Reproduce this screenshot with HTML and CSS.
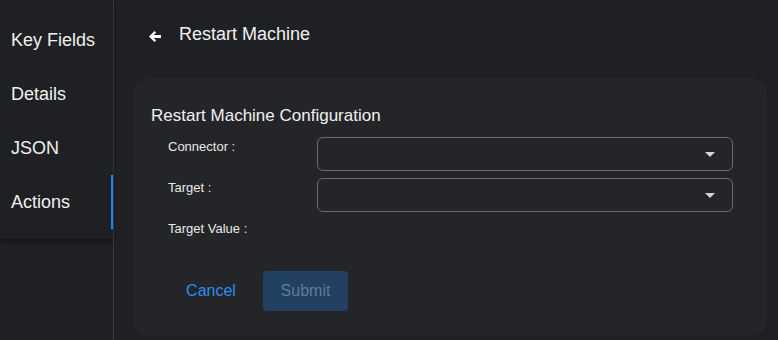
FILE: index.html
```html
<!DOCTYPE html>
<html lang="en">
<head>
    <meta charset="UTF-8">
    <meta name="viewport" content="width=device-width, initial-scale=1.0">
    <title>Restart Machine</title>
    <link rel="stylesheet" href="styles.css">
</head>
<body>
    <div class="layout">
        <aside class="sidebar">
            <nav class="nav">
                <div class="nav-item">Key Fields</div>
                <div class="nav-item">Details</div>
                <div class="nav-item">JSON</div>
                <div class="nav-item active">Actions</div>
            </nav>
        </aside>
        <main class="main">
            <div class="header">
                <svg class="back-icon" viewBox="0 0 12 11" width="12" height="11">
                    <path d="M5.5 0 L0 5.5 L5.5 11 L7.2 9.3 L4.6 6.9 H12 V4.1 H4.6 L7.2 1.7 Z"/>
                </svg>
                <span class="header-title">Restart Machine</span>
            </div>
            <div class="card">
                <div class="card-title">Restart Machine Configuration</div>
                <div class="form">
                    <div class="form-row">
                        <label class="form-label">Connector :</label>
                        <div class="select"><span class="caret"></span></div>
                    </div>
                    <div class="form-row">
                        <label class="form-label">Target :</label>
                        <div class="select"><span class="caret"></span></div>
                    </div>
                    <div class="form-row">
                        <label class="form-label">Target Value :</label>
                    </div>
                </div>
                <div class="actions">
                    <button class="btn btn-text">Cancel</button>
                    <button class="btn btn-primary" disabled>Submit</button>
                </div>
            </div>
        </main>
    </div>
</body>
</html>
```

FILE: styles.css
```css
* {
    margin: 0;
    padding: 0;
    box-sizing: border-box;
    font-family: 'Liberation Sans', Arial, sans-serif;
}

body {
    background: #1f2023;
    color: #ececec;
    overflow: hidden;
}

.layout {
    display: flex;
    height: 340px;
}

.sidebar {
    width: 114px;
    border-right: 1px solid #3b3c3f;
    background: #1f2023;
}

.nav {
    padding: 13px 0 10px;
    box-shadow: 0 3px 4px rgba(0, 0, 0, 0.35);
}

.nav-item {
    display: flex;
    align-items: center;
    height: 54px;
    padding-left: 11px;
    font-size: 18px;
    color: #f0f0f0;
}

.nav-item.active {
    border-right: 2px solid #1e88f0;
}

.main {
    flex: 1;
    padding: 0 11px 0 19px;
}

.header {
    display: flex;
    align-items: center;
    height: 70px;
    padding-left: 16px;
    padding-bottom: 1px;
}

.back-icon {
    fill: #ffffff;
    margin-top: 3px;
}

.header-title {
    margin-left: 18px;
    font-size: 18px;
    color: #f0f0f0;
}

.card {
    margin-top: 8px;
    background: #242528;
    border-radius: 16px;
    padding: 27px 34px 25px 18px;
}

.card-title {
    font-size: 17px;
    line-height: 22px;
    color: #f0f0f0;
}

.form {
    display: flex;
    flex-direction: column;
    gap: 7px;
    margin-top: 10px;
}

.form-row {
    display: flex;
    align-items: flex-start;
    padding-left: 17px;
}

.form-label {
    width: 149px;
    font-size: 13px;
    line-height: 18px;
    padding-top: 1px;
    color: #e8e8e8;
}

.select {
    flex: 1;
    height: 34px;
    border: 1px solid #6a6b6e;
    border-radius: 6px;
    display: flex;
    align-items: center;
    justify-content: flex-end;
    padding-right: 17px;
}

.caret {
    width: 0;
    height: 0;
    border-left: 5px solid transparent;
    border-right: 5px solid transparent;
    border-top: 5px solid #d4d4d4;
}

.actions {
    display: flex;
    gap: 9px;
    margin-top: 33px;
    padding-left: 17px;
}

.btn {
    width: 86px;
    height: 40px;
    border: none;
    border-radius: 4px;
    font-size: 16px;
    background: none;
}

.btn-text {
    color: #2a8ef5;
}

.btn-primary {
    width: 85px;
    background: #22405f;
    color: #5f7b99;
}
```
